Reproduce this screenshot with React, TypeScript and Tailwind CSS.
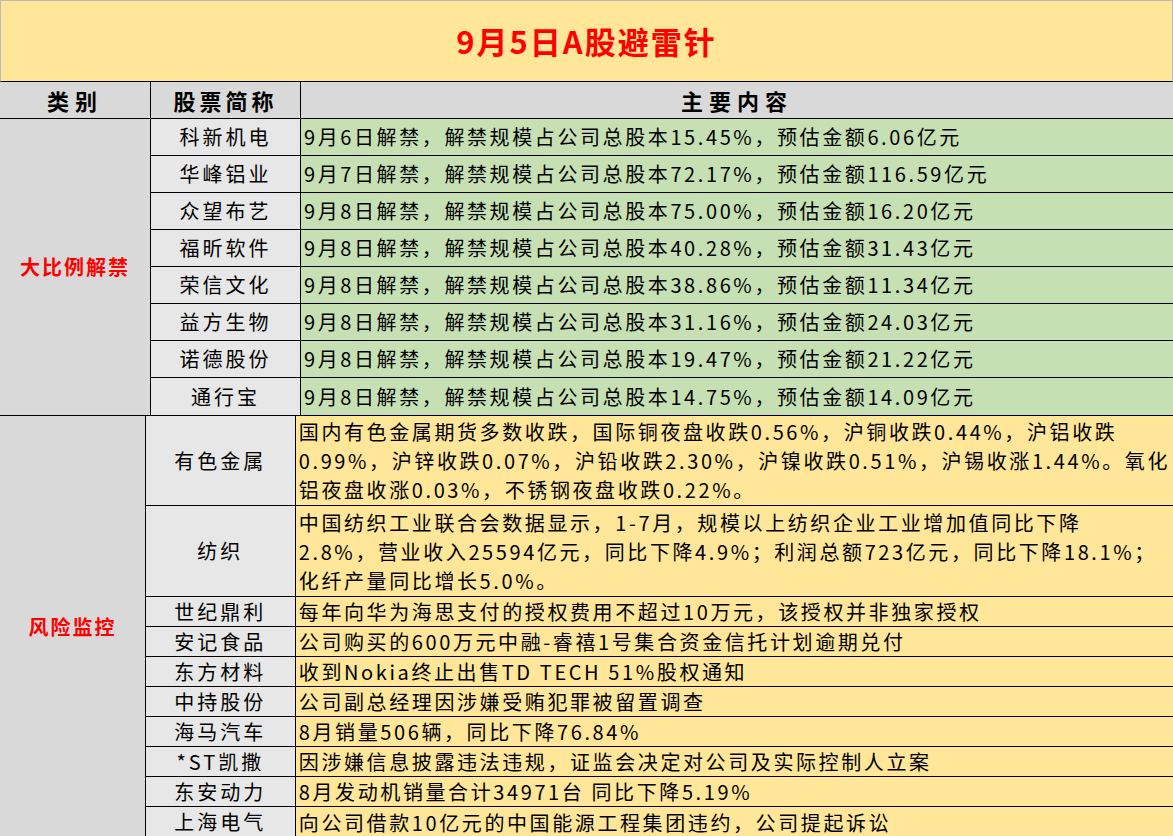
const green = [
  ["科新机电", "9月6日解禁，解禁规模占公司总股本15.45%，预估金额6.06亿元"],
  ["华峰铝业", "9月7日解禁，解禁规模占公司总股本72.17%，预估金额116.59亿元"],
  ["众望布艺", "9月8日解禁，解禁规模占公司总股本75.00%，预估金额16.20亿元"],
  ["福昕软件", "9月8日解禁，解禁规模占公司总股本40.28%，预估金额31.43亿元"],
  ["荣信文化", "9月8日解禁，解禁规模占公司总股本38.86%，预估金额11.34亿元"],
  ["益方生物", "9月8日解禁，解禁规模占公司总股本31.16%，预估金额24.03亿元"],
  ["诺德股份", "9月8日解禁，解禁规模占公司总股本19.47%，预估金额21.22亿元"],
  ["通行宝", "9月8日解禁，解禁规模占公司总股本14.75%，预估金额14.09亿元"],
];
const risk: [string, string[], number][] = [
  ["有色金属", ["国内有色金属期货多数收跌，国际铜夜盘收跌0.56%，沪铜收跌0.44%，沪铝收跌", "0.99%，沪锌收跌0.07%，沪铅收跌2.30%，沪镍收跌0.51%，沪锡收涨1.44%。氧化", "铝夜盘收涨0.03%，不锈钢夜盘收跌0.22%。"], 90],
  ["纺织", ["中国纺织工业联合会数据显示，1-7月，规模以上纺织企业工业增加值同比下降", "2.8%，营业收入25594亿元，同比下降4.9%；利润总额723亿元，同比下降18.1%；", "化纤产量同比增长5.0%。"], 91],
  ["世纪鼎利", ["每年向华为海思支付的授权费用不超过10万元，该授权并非独家授权"], 30],
  ["安记食品", ["公司购买的600万元中融-睿禧1号集合资金信托计划逾期兑付"], 30],
  ["东方材料", ["收到Nokia终止出售TD TECH 51%股权通知"], 30],
  ["中持股份", ["公司副总经理因涉嫌受贿犯罪被留置调查"], 30],
  ["海马汽车", ["8月销量506辆，同比下降76.84%"], 30],
  ["*ST凯撒", ["因涉嫌信息披露违法违规，证监会决定对公司及实际控制人立案"], 30],
  ["东安动力", ["8月发动机销量合计34971台 同比下降5.19%"], 30],
  ["上海电气", ["向公司借款10亿元的中国能源工程集团违约，公司提起诉讼"], 30],
];
const font = { fontFamily: '"Noto Sans CJK SC", "Noto Sans", sans-serif' };
export default function App() {
  return (
    <div className="w-[1173px] h-[836px] overflow-hidden bg-white text-black" style={font}>
      <div className="h-[82px] bg-[#ffe699] border border-[#bbb] border-b-black flex items-center justify-center text-[31px] font-bold text-[#ff0000] tracking-[2px]">9月5日A股避雷针</div>
      <div className="grid grid-cols-[150px_150px_1fr] h-[37px] bg-[#d9d9d9] border-b border-black text-[22px] font-bold">
        <div className="flex items-center justify-center tracking-[6px]">类别</div>
        <div className="flex items-center justify-center border-l border-black tracking-[4px]">股票简称</div>
        <div className="flex items-center justify-center border-l border-black tracking-[6px]">主要内容</div>
      </div>
      <div className="flex border-b border-black">
        <div className="w-[150px] bg-[#d9d9d9] flex items-center justify-center text-[20px] font-bold text-[#ff0000] tracking-[2px]">大比例解禁</div>
        <div className="flex-1 flex flex-col">
          {green.map(([n, c], i) => (
            <div key={n} className={"flex h-[37px] " + (i < green.length - 1 ? "border-b border-black" : "")}>
              <div className="w-[150px] bg-[#e7e7e7] border-l border-black flex items-center justify-center text-[20px] tracking-[3px]">{n}</div>
              <div className="flex-1 bg-[#c6e0b4] border-l border-black flex items-center pl-[3px] text-[20px] tracking-[2.6px] whitespace-nowrap">{c}</div>
            </div>
          ))}
        </div>
      </div>
      <div className="flex">
        <div className="w-[150px] bg-[#d9d9d9] flex items-center justify-center text-[20px] font-bold text-[#ff0000] tracking-[2px]">风险监控</div>
        <div className="flex-1 flex flex-col">
          {risk.map(([n, c, h], i) => (
            <div key={n} className={"flex " + (i < risk.length - 1 ? "border-b border-black" : "")} style={{ height: h }}>
              <div className="w-[150px] bg-[#e7e7e7] border-l border-black flex items-center justify-center text-[20px] tracking-[3px]">{n}</div>
              <div className="flex-1 bg-[#ffe699] border-l border-black flex flex-col justify-center px-[3px] text-[20px] leading-[29px] tracking-[2.6px] whitespace-nowrap overflow-hidden">
                {c.map((l) => <div key={l}>{l}</div>)}
              </div>
            </div>
          ))}
        </div>
      </div>
    </div>
  );
}
